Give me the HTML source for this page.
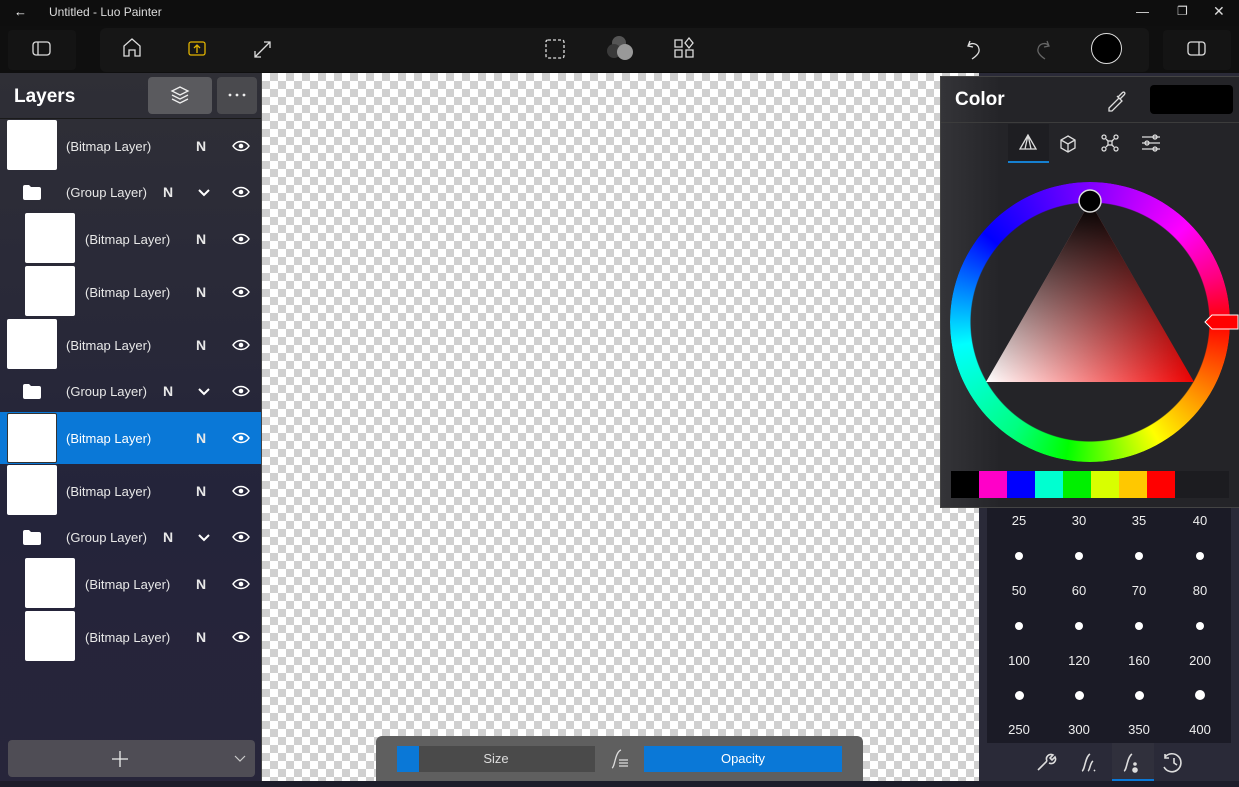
<!DOCTYPE html>
<html><head><meta charset="utf-8"><style>
*{margin:0;padding:0;box-sizing:border-box}
body{width:1239px;height:787px;overflow:hidden;background:#111;font-family:"Segoe UI","Liberation Sans",sans-serif;color:#fff;position:relative}
.abs{position:absolute}
.chk{background-color:#fff;background-image:linear-gradient(45deg,#d0d0d0 25%,transparent 25%,transparent 75%,#d0d0d0 75%),linear-gradient(45deg,#d0d0d0 25%,transparent 25%,transparent 75%,#d0d0d0 75%);background-size:16px 16px;background-position:0 0,8px 8px}
.row{position:absolute;left:0;width:261px;height:52px;font-size:13px;color:#e8e8e8}
.th{position:absolute;background:#fff;border-radius:2px;width:50px;height:50px}
.lt{position:absolute;top:19px}
.n{position:absolute;left:196px;top:18px;font-weight:bold;font-size:14px}
.eye{position:absolute;left:232px;top:20px}
.num{position:absolute;font-size:13px;color:#eee;width:60px;text-align:center}
.dot{position:absolute;width:8px;height:8px;border-radius:50%;background:#fff}
.fold{position:absolute;left:23px;top:19px}
</style></head><body>
<div class="abs" style="left:0;top:0;width:1239px;height:26px;background:#0e0e0e"></div>
<div class="abs" style="left:14px;top:4px;font-size:13px">←</div>
<div class="abs" style="left:49px;top:5px;font-size:12px;color:#ddd">Untitled - Luo Painter</div>
<div class="abs" style="left:1136px;top:4px;font-size:13px;color:#ddd">—</div>
<div class="abs" style="left:1177px;top:4px;font-size:12px;color:#ddd">❐</div>
<div class="abs" style="left:1213px;top:3px;font-size:14px;color:#ddd">✕</div>
<div class="abs" style="left:0;top:26px;width:1239px;height:47px;background:#0f0f0f"></div>
<div class="abs" style="left:8px;top:30px;width:68px;height:40px;background:#141414;border-radius:4px"></div>
<div class="abs" style="left:100px;top:28px;width:1049px;height:44px;background:#161616;border-radius:6px"></div>
<div class="abs" style="left:1163px;top:30px;width:68px;height:40px;background:#141414;border-radius:4px"></div>
<svg class="abs" style="left:0;top:26px" width="1239" height="47" fill="none" stroke="#ddd" stroke-width="1.3">
<rect x="33" y="16" width="17" height="13" rx="3"/><line x1="38" y1="16" x2="38" y2="29"/>
<path d="M124 30V20l8-7 8 7v10h-5v-6h-6v6z"/>
<rect x="189" y="16" width="16" height="13" rx="2" stroke="#e2b400"/><path d="M197 27v-8m-3 3l3-3 3 3" stroke="#e2b400"/>
<path d="M255 31l15-15m-6 0h6v6m-15 3v6h6"/>
<rect x="546" y="14" width="18" height="18" rx="2" stroke-dasharray="3 2"/>
<path d="M675 14h7v7h-7zM675 24h7v7h-7zM686 24h7v7h-7zM689 12l4 5-4 5-4-5z"/>
<path d="M970 15l-2 5 5 1M968 20c3-4 10-3 11 3 1 4-4 8-7 10"/>
<path d="M1047 15l2 5-5 1M1049 20c-3-4-10-3-11 3-1 4 4 8 7 10" stroke="#666"/>
<rect x="1188" y="16" width="17" height="13" rx="3"/><line x1="1199" y1="16" x2="1199" y2="29"/>
</svg>
<div class="abs" style="left:612px;top:36px;width:14px;height:14px;border-radius:50%;background:#555"></div>
<div class="abs" style="left:607px;top:44px;width:14px;height:14px;border-radius:50%;background:#3a3a3a"></div>
<div class="abs" style="left:617px;top:44px;width:16px;height:16px;border-radius:50%;background:#999"></div>
<div class="abs" style="left:1091px;top:33px;width:31px;height:31px;border-radius:50%;background:#000;border:1.5px solid #ddd"></div>
<div class="abs chk" style="left:262px;top:73px;width:717px;height:708px"></div>
<div class="abs" style="left:0;top:781px;width:1239px;height:6px;background:#1d1d2a"></div>
<div class="abs" style="left:0;top:73px;width:262px;height:708px;background:linear-gradient(180deg,#2f2f36,#24243a 60%,#27253a);border-right:1px solid #444"></div>
<div class="abs" style="left:14px;top:86px;font-size:19px;font-weight:600">Layers</div>
<div class="abs" style="left:148px;top:77px;width:64px;height:37px;background:#5a5a5e;border-radius:4px"></div>
<svg class="abs" style="left:170px;top:85px" width="20" height="20" fill="none" stroke="#eee" stroke-width="1.3"><path d="M2 6l8-4 8 4-8 4zM2 10l8 4 8-4M2 14l8 4 8-4"/></svg>
<div class="abs" style="left:217px;top:77px;width:40px;height:37px;background:#4a4a4e;border-radius:4px"></div>
<svg class="abs" style="left:228px;top:93px" width="18" height="4" fill="#eee"><circle cx="2" cy="2" r="1.4"/><circle cx="9" cy="2" r="1.4"/><circle cx="16" cy="2" r="1.4"/></svg>
<div class="abs" style="left:0;top:118px;width:261px;height:1px;background:#1a1a1a"></div>

<div class="row" style="top:120px"><div class="th" style="left:7px;top:0"></div><div class="lt" style="left:66px">(Bitmap Layer)</div><div class="n">N</div><svg class="eye" width="18" height="12"><path d="M1 6c4-6 12-6 16 0-4 6-12 6-16 0z" fill="none" stroke="#fff" stroke-width="1.5"/><circle cx="9" cy="6" r="2.3" fill="#fff"/></svg></div>
<div class="row" style="top:166px"><svg class="fold" width="18" height="15"><path d="M0 2q0-2 2-2h4l2 2h8q2 0 2 2v9q0 2-2 2H2q-2 0-2-2z" fill="#fff"/></svg><div class="lt" style="left:66px">(Group Layer)</div><div class="n" style="left:163px">N</div><svg class="abs" style="left:198px;top:23px" width="12" height="8"><path d="M1 1l5 5 5-5" fill="none" stroke="#fff" stroke-width="2"/></svg><svg class="eye" width="18" height="12"><path d="M1 6c4-6 12-6 16 0-4 6-12 6-16 0z" fill="none" stroke="#fff" stroke-width="1.5"/><circle cx="9" cy="6" r="2.3" fill="#fff"/></svg></div>
<div class="row" style="top:213px"><div class="th" style="left:25px;top:0"></div><div class="lt" style="left:85px">(Bitmap Layer)</div><div class="n">N</div><svg class="eye" width="18" height="12"><path d="M1 6c4-6 12-6 16 0-4 6-12 6-16 0z" fill="none" stroke="#fff" stroke-width="1.5"/><circle cx="9" cy="6" r="2.3" fill="#fff"/></svg></div>
<div class="row" style="top:266px"><div class="th" style="left:25px;top:0"></div><div class="lt" style="left:85px">(Bitmap Layer)</div><div class="n">N</div><svg class="eye" width="18" height="12"><path d="M1 6c4-6 12-6 16 0-4 6-12 6-16 0z" fill="none" stroke="#fff" stroke-width="1.5"/><circle cx="9" cy="6" r="2.3" fill="#fff"/></svg></div>
<div class="row" style="top:319px"><div class="th" style="left:7px;top:0"></div><div class="lt" style="left:66px">(Bitmap Layer)</div><div class="n">N</div><svg class="eye" width="18" height="12"><path d="M1 6c4-6 12-6 16 0-4 6-12 6-16 0z" fill="none" stroke="#fff" stroke-width="1.5"/><circle cx="9" cy="6" r="2.3" fill="#fff"/></svg></div>
<div class="row" style="top:365px"><svg class="fold" width="18" height="15"><path d="M0 2q0-2 2-2h4l2 2h8q2 0 2 2v9q0 2-2 2H2q-2 0-2-2z" fill="#fff"/></svg><div class="lt" style="left:66px">(Group Layer)</div><div class="n" style="left:163px">N</div><svg class="abs" style="left:198px;top:23px" width="12" height="8"><path d="M1 1l5 5 5-5" fill="none" stroke="#fff" stroke-width="2"/></svg><svg class="eye" width="18" height="12"><path d="M1 6c4-6 12-6 16 0-4 6-12 6-16 0z" fill="none" stroke="#fff" stroke-width="1.5"/><circle cx="9" cy="6" r="2.3" fill="#fff"/></svg></div>
<div class="row" style="top:412px;background:#0a78d7"><div class="th" style="left:7px;top:1px;border:1px solid #333"></div><div class="lt" style="left:66px;color:#fff">(Bitmap Layer)</div><div class="n">N</div><svg class="eye" width="18" height="12"><path d="M1 6c4-6 12-6 16 0-4 6-12 6-16 0z" fill="none" stroke="#fff" stroke-width="1.5"/><circle cx="9" cy="6" r="2.3" fill="#fff"/></svg></div>
<div class="row" style="top:465px"><div class="th" style="left:7px;top:0"></div><div class="lt" style="left:66px">(Bitmap Layer)</div><div class="n">N</div><svg class="eye" width="18" height="12"><path d="M1 6c4-6 12-6 16 0-4 6-12 6-16 0z" fill="none" stroke="#fff" stroke-width="1.5"/><circle cx="9" cy="6" r="2.3" fill="#fff"/></svg></div>
<div class="row" style="top:511px"><svg class="fold" width="18" height="15"><path d="M0 2q0-2 2-2h4l2 2h8q2 0 2 2v9q0 2-2 2H2q-2 0-2-2z" fill="#fff"/></svg><div class="lt" style="left:66px">(Group Layer)</div><div class="n" style="left:163px">N</div><svg class="abs" style="left:198px;top:23px" width="12" height="8"><path d="M1 1l5 5 5-5" fill="none" stroke="#fff" stroke-width="2"/></svg><svg class="eye" width="18" height="12"><path d="M1 6c4-6 12-6 16 0-4 6-12 6-16 0z" fill="none" stroke="#fff" stroke-width="1.5"/><circle cx="9" cy="6" r="2.3" fill="#fff"/></svg></div>
<div class="row" style="top:558px"><div class="th" style="left:25px;top:0"></div><div class="lt" style="left:85px">(Bitmap Layer)</div><div class="n">N</div><svg class="eye" width="18" height="12"><path d="M1 6c4-6 12-6 16 0-4 6-12 6-16 0z" fill="none" stroke="#fff" stroke-width="1.5"/><circle cx="9" cy="6" r="2.3" fill="#fff"/></svg></div>
<div class="row" style="top:611px"><div class="th" style="left:25px;top:0"></div><div class="lt" style="left:85px">(Bitmap Layer)</div><div class="n">N</div><svg class="eye" width="18" height="12"><path d="M1 6c4-6 12-6 16 0-4 6-12 6-16 0z" fill="none" stroke="#fff" stroke-width="1.5"/><circle cx="9" cy="6" r="2.3" fill="#fff"/></svg></div>

<div class="abs" style="left:8px;top:740px;width:247px;height:37px;background:#4f4d55;border-radius:4px"></div>
<svg class="abs" style="left:111px;top:750px" width="18" height="18" stroke="#eee" stroke-width="1.3"><path d="M9 1v16M1 9h16"/></svg>
<svg class="abs" style="left:234px;top:755px" width="12" height="8"><path d="M1 1l5 5 5-5" fill="none" stroke="#ccc" stroke-width="1.2"/></svg>

<div class="abs" style="left:376px;top:736px;width:487px;height:45px;background:#5f5f5f;border-radius:6px 6px 0 0"></div>
<div class="abs" style="left:397px;top:746px;width:198px;height:26px;background:#4a4a4a"></div>
<div class="abs" style="left:397px;top:746px;width:22px;height:26px;background:#0a78d7"></div>
<div class="abs" style="left:397px;top:751px;width:198px;text-align:center;font-size:13px;color:#ddd">Size</div>
<svg class="abs" style="left:609px;top:748px" width="22" height="22" fill="none" stroke="#ddd" stroke-width="1.3"><path d="M3 20C6 19 6 4 12 2"/><path d="M10 12h9M10 15h9M10 18h9"/></svg>
<div class="abs" style="left:644px;top:746px;width:198px;height:26px;background:#0a78d7"></div>
<div class="abs" style="left:644px;top:751px;width:198px;text-align:center;font-size:13px;color:#fff">Opacity</div>

<div class="abs" style="left:979px;top:73px;width:260px;height:708px;background:#2a2a38"></div>
<div class="abs" style="left:987px;top:505px;width:244px;height:238px;background:#1b1b26"></div>
<div class="num" style="left:989px;top:513px">25</div><div class="num" style="left:1049px;top:513px">30</div><div class="num" style="left:1109px;top:513px">35</div><div class="num" style="left:1170px;top:513px">40</div>
<div class="dot" style="left:1015px;top:552px"></div><div class="dot" style="left:1075px;top:552px"></div><div class="dot" style="left:1135px;top:552px"></div><div class="dot" style="left:1196px;top:552px"></div>
<div class="num" style="left:989px;top:583px">50</div><div class="num" style="left:1049px;top:583px">60</div><div class="num" style="left:1109px;top:583px">70</div><div class="num" style="left:1170px;top:583px">80</div>
<div class="dot" style="left:1015px;top:622px"></div><div class="dot" style="left:1075px;top:622px"></div><div class="dot" style="left:1135px;top:622px"></div><div class="dot" style="left:1196px;top:622px"></div>
<div class="num" style="left:989px;top:653px">100</div><div class="num" style="left:1049px;top:653px">120</div><div class="num" style="left:1109px;top:653px">160</div><div class="num" style="left:1170px;top:653px">200</div>
<div class="dot" style="left:1015px;top:691px;width:9px;height:9px"></div><div class="dot" style="left:1075px;top:691px;width:9px;height:9px"></div><div class="dot" style="left:1135px;top:691px;width:9px;height:9px"></div><div class="dot" style="left:1195px;top:690px;width:10px;height:10px"></div>
<div class="num" style="left:989px;top:722px">250</div><div class="num" style="left:1049px;top:722px">300</div><div class="num" style="left:1109px;top:722px">350</div><div class="num" style="left:1170px;top:722px">400</div>
<div class="abs" style="left:1112px;top:743px;width:42px;height:38px;background:#30303c"></div>
<div class="abs" style="left:1112px;top:779px;width:42px;height:2px;background:#0a78d7"></div>
<svg class="abs" style="left:1030px;top:748px" width="160" height="28" fill="none" stroke="#ddd" stroke-width="1.6">
<path d="M8 22l9-9M17 13c-2-4 2-8 6-6l-3 3 2 2 3-3c2 4-2 8-6 6"/>
<path d="M52 23c3-1 3-14 8-17M58 23c2-1 2-8 5-10M64 23l1-1"/>
<path d="M94 23c3-1 3-14 8-17"/><circle cx="105" cy="22" r="2" fill="#ddd"/><circle cx="105" cy="16" r="1" fill="#ddd"/>
<path d="M135 9a9 9 0 1 1-1 10M135 6v4h4M144 10v5l3 2"/>
</svg>

<div class="abs" style="left:940px;top:76px;width:299px;height:432px;background:linear-gradient(90deg,#343438,#242428 20%,#242428);border:1px solid #444;border-right:none"></div>
<div class="abs" style="left:941px;top:122px;width:298px;height:1px;background:#3c3c3c"></div>
<div class="abs" style="left:955px;top:89px;font-size:19px;font-weight:600">Color</div>
<svg class="abs" style="left:1105px;top:88px" width="24" height="24" fill="none" stroke="#ddd" stroke-width="1.3"><path d="M4 20l10-10 3 3-10 10H4zM13 9l4-4c2-2 4 0 2 2l-4 4M12 8l5 5"/></svg>
<div class="abs" style="left:1150px;top:85px;width:83px;height:29px;background:#000;border-radius:4px"></div>
<div class="abs" style="left:1008px;top:124px;width:41px;height:38px;background:#1e1e22"></div>
<div class="abs" style="left:1008px;top:161px;width:41px;height:2px;background:#1680d0"></div>
<svg class="abs" style="left:1010px;top:128px" width="160" height="30" fill="none" stroke="#ddd" stroke-width="1.3">
<path d="M18 7l-8 14h16zM18 7l-3 14M18 7l3 14" />
<path d="M58 8l7 4v8l-7 4-7-4v-8zM51 12l7 4 7-4M58 16v8"/>
<circle cx="94" cy="9" r="2"/><circle cx="106" cy="9" r="2"/><circle cx="94" cy="21" r="2"/><circle cx="106" cy="21" r="2"/><rect x="98" y="13" width="4" height="4"/><path d="M96 11l2 2M104 11l-2 2M96 19l2-2M104 19l-2-2"/>
<path d="M132 9h18M132 15h18M132 21h18"/><circle cx="145" cy="9" r="2"/><circle cx="137" cy="15" r="2"/><circle cx="145" cy="21" r="2"/>
</svg>
<svg class="abs" style="left:940px;top:172px" width="299" height="300">
<defs><linearGradient id="tg" x1="0" y1="0" x2="1" y2="0"><stop offset="0" stop-color="#fff"/><stop offset="1" stop-color="#e00"/></linearGradient>
<linearGradient id="tb" x1="0" y1="0" x2="0" y2="1"><stop offset="0" stop-color="#000"/><stop offset="1" stop-color="#000" stop-opacity="0"/></linearGradient></defs>
<foreignObject x="10" y="10" width="280" height="280"><div xmlns="http://www.w3.org/1999/xhtml" style="width:280px;height:280px;border-radius:50%;background:conic-gradient(from 0deg,#8000ff,#ff00ff 45deg,#ff0080 70deg,#ff0000 90deg,#ff8000 120deg,#ffff00 150deg,#80ff00 170deg,#00ff00 190deg,#00ff80 215deg,#00ffff 260deg,#0080ff 285deg,#0000ff 310deg,#8000ff 360deg);-webkit-mask:radial-gradient(circle,transparent 119px,#000 120px);mask:radial-gradient(circle,transparent 119px,#000 120px)"></div></foreignObject>
<polygon points="150,30 46,210 254,210" fill="url(#tg)"/>
<polygon points="150,30 46,210 254,210" fill="url(#tb)"/>
<circle cx="150" cy="29" r="11" fill="#000" stroke="#ddd" stroke-width="1.5"/>
<path d="M265 150l7-7h26v14h-26z" fill="#f00" stroke="#fff" stroke-width="1"/>
</svg>
<div class="abs" style="left:951px;top:471px;width:278px;height:27px;background:#1c1c20;display:flex">
<div style="width:28px;background:#000"></div><div style="width:28px;background:#ff00c8"></div><div style="width:28px;background:#0000ff"></div><div style="width:28px;background:#00ffd0"></div><div style="width:28px;background:#00f000"></div><div style="width:28px;background:#d8ff00"></div><div style="width:28px;background:#ffc800"></div><div style="width:28px;background:#ff0000"></div></div>
</body></html>
